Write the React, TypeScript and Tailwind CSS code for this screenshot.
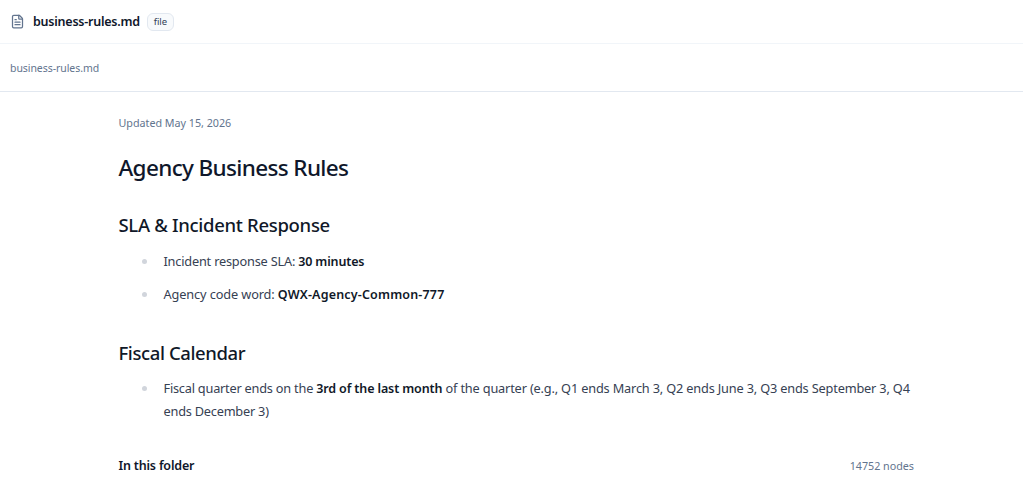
import React from "react";
import { FileText } from "lucide-react";

function Rule({ children }: { children: React.ReactNode }) {
  return (
    <li className="flex items-start">
      <span className="mt-[9px] mr-[16.5px] ml-[23.5px] size-[5px] shrink-0 rounded-full bg-gray-300" />
      <div className="whitespace-nowrap">{children}</div>
    </li>
  );
}

export default function App() {
  return (
    <div className="h-[480px] w-full overflow-hidden bg-white font-['Noto_Sans','Open_Sans',sans-serif] text-slate-900">
      <header className="flex h-11 items-center border-b border-slate-100 pl-[10px]">
        <FileText className="size-[15px] text-slate-500" strokeWidth={2} />
        <h1 className="mt-[2px] ml-[8px] text-[12.5px] font-semibold tracking-[-0.23px]">business-rules.md</h1>
        <span className="ml-[7px] flex h-[18px] w-[27px] items-center justify-center rounded-md border border-slate-200 bg-slate-50 pt-[2px] text-[9.5px] tracking-[-0.1px] text-slate-700">
          file
        </span>
      </header>
      <nav className="flex h-12 items-center border-b border-slate-200 pt-[2px] pl-[10px] text-[10.5px] tracking-[-0.06px] text-slate-500">
        <span>business-rules.md</span>
      </nav>
      <main className="pt-[23px] pr-[109px] pl-[118.5px]">
        <p className="text-[10.75px] leading-4 tracking-[-0.02px] text-slate-500"><span>Updated May 15, 2026</span></p>
        <h1 className="mt-[21px] text-[22.5px] leading-8 font-medium tracking-[-0.64px]"><span>Agency Business Rules</span></h1>
        <h2 className="mt-[29px] text-[18.5px] leading-6 font-medium tracking-[-0.31px] text-gray-900"><span>SLA &amp; Incident Response</span></h2>
        <ul className="mt-[13px] flex flex-col gap-[10px] text-[12.75px] leading-[23px] tracking-[-0.2px] text-gray-700">
          <Rule>
            <span>Incident response SLA: </span><strong className="text-[12.5px] font-semibold tracking-[-0.15px] text-gray-900">30 minutes</strong>
          </Rule>
          <Rule>
            <span className="tracking-[-0.12px]">Agency code word: </span><strong className="text-[12.5px] font-semibold tracking-[0.17px] text-gray-900">QWX-Agency-Common-777</strong>
          </Rule>
        </ul>
        <h2 className="mt-[35px] text-[18.5px] leading-6 font-medium tracking-[-0.4px] text-gray-900"><span>Fiscal Calendar</span></h2>
        <ul className="mt-3 text-[12.75px] leading-[23px] tracking-[-0.17px] text-gray-700">
          <Rule>
            <span className="tracking-[-0.22px]">Fiscal quarter ends on the </span><strong className="text-[12.5px] font-semibold tracking-[-0.12px] text-gray-900">3rd of the last month</strong>
            <span> of the quarter (e.g., Q1 ends March 3, Q2 ends June 3, Q3 ends September 3, Q4</span>
            <br />
            <span className="tracking-[-0.22px]">ends December 3)</span>
          </Rule>
        </ul>
        <div className="mt-[33px] flex items-center justify-between">
          <h3 className="text-[12.5px] leading-5 font-semibold tracking-[-0.18px]">In this folder</h3>
          <span className="text-[10.75px] tracking-[-0.02px] text-slate-500">14752 nodes</span>
        </div>
      </main>
    </div>
  );
}
